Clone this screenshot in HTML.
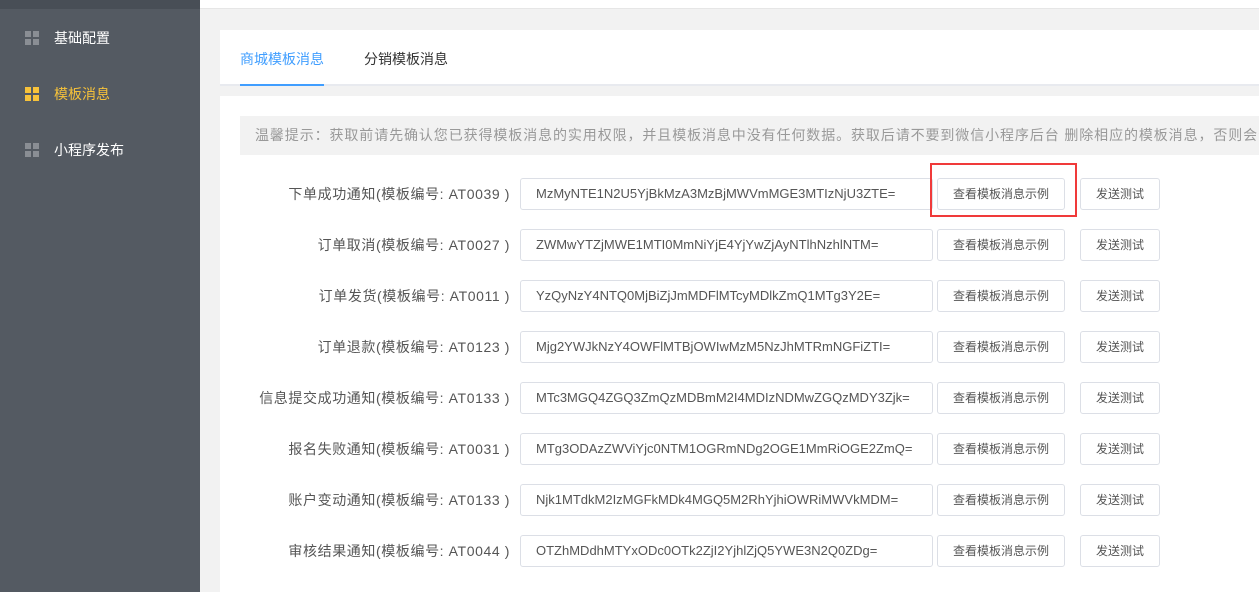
<!DOCTYPE html><html><head><meta charset="utf-8"><style>
*{margin:0;padding:0;box-sizing:border-box}
body{width:1259px;height:592px;overflow:hidden;background:#f2f2f2;font-family:"Liberation Sans","Noto Sans CJK SC",sans-serif;font-size:13px;position:relative}
.side{position:absolute;left:0;top:0;width:200px;height:592px;background:#545a62;z-index:2}
.side .top{height:9px;background:#484e56}
.item{position:absolute;left:25px;color:#fff;font-size:14px;display:flex;align-items:center}
.ic{width:14px;height:14px;margin-right:15px;display:grid;grid-template-columns:6px 6px;gap:2px}
.ic i{background:#8a8e94}
.act{color:#f7c23a}.act .ic i{background:#f7c23a}
.hdr{position:absolute;left:200px;top:0;right:0;height:9px;background:#fff;border-bottom:1px solid #e6e6e6}
.tabs{position:absolute;left:220px;top:30px;right:0;height:56px;background:#fff;border-bottom:2px solid #e8eaef}
.tab{position:absolute;top:19px;font-size:14px;color:#333}
.tab.on{color:#409eff}
.ul{position:absolute;left:20px;width:84px;bottom:-2px;height:2px;background:#409eff}
.card{position:absolute;left:220px;top:96px;right:0;bottom:0;background:#fff}
.tip{position:absolute;left:20px;top:20px;right:0;height:39px;background:#f2f2f2;color:#999;font-size:14px;line-height:39px;padding-left:15px;white-space:nowrap;overflow:hidden;letter-spacing:0.9px}
.row{position:absolute;left:0;right:0;height:32px}
.lb{position:absolute;left:0;width:290px;text-align:right;top:0;line-height:32px;color:#555;font-size:14px;letter-spacing:0.6px;white-space:nowrap}
.in{position:absolute;left:300px;width:413px;top:0;height:32px;border:1px solid #dcdfe6;border-radius:3px;line-height:30px;padding-left:15px;color:#555;font-size:13px;white-space:nowrap}
.b1,.b2{position:absolute;top:0;height:32px;border:1px solid #dcdfe6;border-radius:3px;line-height:30px;text-align:center;color:#555;font-size:12px}
.b1{left:717px;width:128px}.b2{left:860px;width:80px}
.red{position:absolute;left:930px;top:163px;width:147px;height:54px;border:2px solid #f03a3a}
</style></head><body>
<div class="side"><div class="top"></div>
<div class="item" style="top:28px"><div class="ic"><i></i><i></i><i></i><i></i></div>基础配置</div>
<div class="item act" style="top:84px"><div class="ic"><i></i><i></i><i></i><i></i></div>模板消息</div>
<div class="item" style="top:140px"><div class="ic"><i></i><i></i><i></i><i></i></div>小程序发布</div>
</div>
<div class="hdr"></div>
<div class="tabs"><div class="tab on" style="left:20px">商城模板消息</div><div class="tab" style="left:144px">分销模板消息</div><div class="ul"></div></div>
<div class="card">
<div class="tip">温馨提示：获取前请先确认您已获得模板消息的实用权限，并且模板消息中没有任何数据。获取后请不要到微信小程序后台 删除相应的模板消息，否则会影响模板消息正常使用。</div>
<div class="row" style="top:82px"><div class="lb">下单成功通知(模板编号: AT0039 )</div><div class="in">MzMyNTE1N2U5YjBkMzA3MzBjMWVmMGE3MTIzNjU3ZTE=</div><div class="b1">查看模板消息示例</div><div class="b2">发送测试</div></div>
<div class="row" style="top:133px"><div class="lb">订单取消(模板编号: AT0027 )</div><div class="in">ZWMwYTZjMWE1MTI0MmNiYjE4YjYwZjAyNTlhNzhlNTM=</div><div class="b1">查看模板消息示例</div><div class="b2">发送测试</div></div>
<div class="row" style="top:184px"><div class="lb">订单发货(模板编号: AT0011 )</div><div class="in">YzQyNzY4NTQ0MjBiZjJmMDFlMTcyMDlkZmQ1MTg3Y2E=</div><div class="b1">查看模板消息示例</div><div class="b2">发送测试</div></div>
<div class="row" style="top:235px"><div class="lb">订单退款(模板编号: AT0123 )</div><div class="in">Mjg2YWJkNzY4OWFlMTBjOWIwMzM5NzJhMTRmNGFiZTI=</div><div class="b1">查看模板消息示例</div><div class="b2">发送测试</div></div>
<div class="row" style="top:286px"><div class="lb">信息提交成功通知(模板编号: AT0133 )</div><div class="in">MTc3MGQ4ZGQ3ZmQzMDBmM2I4MDIzNDMwZGQzMDY3Zjk=</div><div class="b1">查看模板消息示例</div><div class="b2">发送测试</div></div>
<div class="row" style="top:337px"><div class="lb">报名失败通知(模板编号: AT0031 )</div><div class="in">MTg3ODAzZWViYjc0NTM1OGRmNDg2OGE1MmRiOGE2ZmQ=</div><div class="b1">查看模板消息示例</div><div class="b2">发送测试</div></div>
<div class="row" style="top:388px"><div class="lb">账户变动通知(模板编号: AT0133 )</div><div class="in">Njk1MTdkM2IzMGFkMDk4MGQ5M2RhYjhiOWRiMWVkMDM=</div><div class="b1">查看模板消息示例</div><div class="b2">发送测试</div></div>
<div class="row" style="top:439px"><div class="lb">审核结果通知(模板编号: AT0044 )</div><div class="in">OTZhMDdhMTYxODc0OTk2ZjI2YjhlZjQ5YWE3N2Q0ZDg=</div><div class="b1">查看模板消息示例</div><div class="b2">发送测试</div></div>
</div>
<div class="red"></div>
</body></html>
